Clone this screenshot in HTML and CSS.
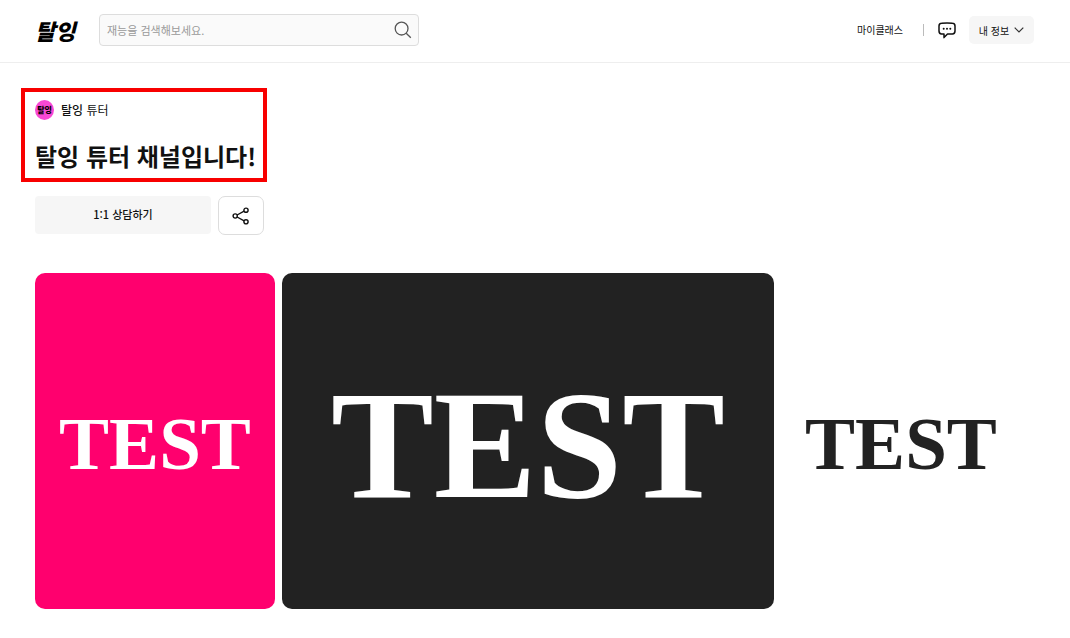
FILE: index.html
```
<!DOCTYPE html>
<html lang="ko">
<head>
  <meta charset="UTF-8" />
  <meta name="viewport" content="width=device-width, initial-scale=1.0" />
  <title>탈잉 튜터</title>
  <link rel="stylesheet" href="styles.css">
</head>
<body>
  <header class="header">
    <a class="logo" href="#">탈잉</a>
    <form class="search">
      <input type="search" aria-label="재능 검색" placeholder="재능을 검색해보세요.">
      <button type="submit" aria-label="검색">
        <svg width="18" height="18" viewBox="0 0 18 18" fill="none" stroke="#555" stroke-width="1.3">
          <circle cx="7.6" cy="7.6" r="6.4" />
          <path d="M12.2 12.2l4.6 4.6" />
        </svg>
      </button>
    </form>
    <nav class="nav">
      <a class="my-class" href="#">마이클래스</a>
      <a class="talk" href="#" aria-label="메시지">
        <svg width="18" height="17" viewBox="0 0 18 17" fill="none" stroke="#111" stroke-width="1.5" stroke-linejoin="round">
          <path d="M3.5 1.2Q9 .6 14.5 1.2Q17 1.4 17 4V9Q17 11.8 14.5 12H9.5L6 15.6V12H3.5Q1 11.8 1 9V4Q1 1.4 3.5 1.2Z" />
          <g fill="#111" stroke="none">
            <circle cx="5.7" cy="6.7" r="1" />
            <circle cx="9" cy="6.7" r="1" />
            <circle cx="12.3" cy="6.7" r="1" />
          </g>
        </svg>
      </a>
      <button class="my-info" type="button">
        내 정보
        <svg width="10" height="6" viewBox="0 0 10 6" fill="none" stroke="#333" stroke-width="1.2">
          <path d="M.7.7L5 5L9.3.7" />
        </svg>
      </button>
    </nav>
  </header>

  <main class="channel">
    <section class="profile">
      <div class="tutor">
        <span class="avatar">탈잉</span>
        <span><b>탈잉</b> 튜터</span>
      </div>
      <h1>탈잉 튜터 채널입니다!</h1>
    </section>

    <div class="actions">
      <button class="consult" type="button">1:1 상담하기</button>
      <button class="share" type="button" aria-label="공유">
        <svg width="18" height="18" viewBox="0 0 18 18" fill="none" stroke="#111" stroke-width="1.4">
          <circle cx="3.2" cy="9" r="2.1" />
          <circle cx="14" cy="3.2" r="2.1" />
          <circle cx="14" cy="14.8" r="2.1" />
          <path d="M5.1 8L12.1 4.2M5.1 10L12.1 13.8" />
        </svg>
      </button>
    </div>

    <div class="gallery">
      <div class="card pink">TEST</div>
      <div class="card dark">TEST</div>
      <div class="card white">TEST</div>
    </div>
  </main>
</body>
</html>
```
FILE: styles.css
```
* {
  box-sizing: border-box;
}
body {
  margin: 0;
  background: #fff;
  color: #111;
  font-family: "Noto Sans CJK KR", sans-serif;
  font-size: 12px;
}
a {
  color: inherit;
  text-decoration: none;
}
button, input {
  font-family: inherit;
  color: inherit;
}
button {
  padding: 0;
  border: none;
  cursor: pointer;
}
svg {
  display: block;
}

.header {
  display: flex;
  align-items: center;
  height: 63px;
  padding: 0 36px 2px 35px;
  border-bottom: 1px solid #eee;
}
.logo {
  width: 64px;
  color: #000;
  font-size: 22px;
  font-weight: 900;
  font-style: italic;
  line-height: 32px;
}
.search {
  display: flex;
  align-items: center;
  width: 320px;
  height: 32px;
  padding: 0 6px 0 7px;
  background: #fafafa;
  border: 1px solid #ddd;
  border-radius: 4px;
}
.search input {
  flex: 1;
  min-width: 0;
  padding: 0;
  border: none;
  outline: none;
  background: none;
  font-size: 11px;
}
.search input::placeholder {
  color: #999;
}
.search button {
  background: none;
}
.nav {
  display: flex;
  align-items: center;
  margin-left: auto;
  font-size: 10px;
}
.my-class {
  padding-right: 20px;
  border-right: 1px solid #bbb;
  line-height: 12px;
}
.talk {
  margin: 0 13px 0 14px;
}
.my-info {
  display: flex;
  align-items: center;
  justify-content: center;
  gap: 5px;
  width: 65px;
  height: 28px;
  background: #f6f6f6;
  border-radius: 5px;
  font-size: 10px;
}

.channel {
  padding: 25px 35px 30px;
}
.profile {
  width: fit-content;
  margin-left: -14px;
  padding: 8px 7px 4px 10px;
  border: 4px solid #f80000;
}
.tutor {
  display: flex;
  align-items: center;
  gap: 7px;
  line-height: 20px;
}
.tutor b {
  font-weight: 500;
}
.avatar {
  width: 19px;
  height: 20px;
  background: #f848d4;
  border-radius: 50%;
  color: #000;
  font-size: 8px;
  font-weight: 900;
  text-align: center;
}
h1 {
  margin: 18px 0 0;
  font-size: 24px;
  font-weight: 700;
  line-height: 36px;
}
.actions {
  display: flex;
  gap: 7px;
  margin-top: 14px;
}
.consult {
  width: 176px;
  height: 38px;
  padding-bottom: 3px;
  background: #f6f6f6;
  border-radius: 4px;
  font-size: 11px;
  font-weight: 500;
}
.share {
  display: flex;
  align-items: center;
  justify-content: center;
  width: 46px;
  height: 39px;
  background: #fff;
  border: 1px solid #ddd;
  border-radius: 7px;
}

.gallery {
  display: grid;
  grid-template-columns: 240fr 492fr 240fr;
  gap: 7px;
  margin: 38px 14px 0 0;
}
.card {
  display: flex;
  align-items: center;
  justify-content: center;
  min-width: 0;
  padding-top: 4px;
  border-radius: 10px;
  font-family: "Liberation Serif", serif;
  font-size: 75px;
  font-weight: 700;
  line-height: 1;
}
.pink {
  aspect-ratio: 5 / 7;
  background: #ff006e;
  color: #fff;
}
.dark {
  padding-top: 8px;
  background: #222;
  color: #fff;
  font-size: 154px;
}
.white {
  background: #fff;
  color: #222;
}
```
